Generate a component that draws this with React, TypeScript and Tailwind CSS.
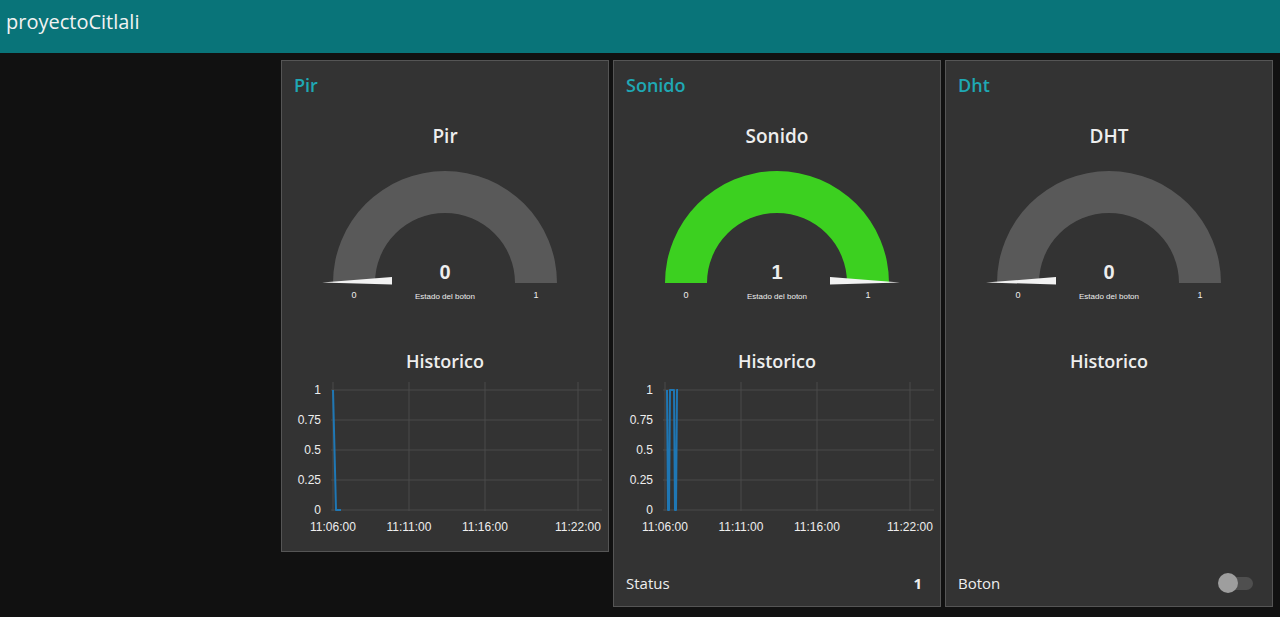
import React from "react";

const uiFont = { fontFamily: '"Open Sans", "Noto Sans", sans-serif' };

type GaugeProps = { title: string; value: 0 | 1; color: string };

const Gauge = ({ title, value, color }: GaugeProps) => {
  // arc centre in svg coords
  const cx = 163;
  const cy = 135;
  const needle =
    value === 0
      ? "40,134.5 110,129 110,136.5"
      : "286,134.5 216,129 216,136.5";
  return (
    <div className="flex flex-col items-center">
      <div className="mt-[15px] h-[24px] text-[19px] leading-[24px] font-semibold text-[#eeeeee]">
        {title}
      </div>
      <svg width="326" height="157" viewBox="0 0 326 157">
        <path
          d={`M ${cx - 112} ${cy} A 112 112 0 0 1 ${cx + 112} ${cy} L ${cx + 70} ${cy} A 70 70 0 0 0 ${cx - 70} ${cy} Z`}
          fill={color}
        />
        <polygon points={needle} fill="#f2f2f2" />
        <text
          x={cx}
          y={131}
          textAnchor="middle"
          fill="#eeeeee"
          fontSize="20"
          fontWeight="bold"
          fontFamily="Liberation Sans, Arial, sans-serif"
        >
          {value}
        </text>
        <text x={72} y={150} textAnchor="middle" fill="#eeeeee" fontSize="9" fontFamily="Liberation Sans, Arial, sans-serif">
          0
        </text>
        <text x={254} y={150} textAnchor="middle" fill="#eeeeee" fontSize="9" fontFamily="Liberation Sans, Arial, sans-serif">
          1
        </text>
        <text x={cx} y={151} textAnchor="middle" fill="#eeeeee" fontSize="8" fontFamily="Liberation Sans, Arial, sans-serif">
          Estado del boton
        </text>
      </svg>
    </div>
  );
};

const yTicks = [
  { label: "1", y: 12 },
  { label: "0.75", y: 42 },
  { label: "0.5", y: 72 },
  { label: "0.25", y: 102 },
  { label: "0", y: 132 },
];

const xTicks = [
  { label: "11:06:00", x: 51 },
  { label: "11:11:00", x: 127 },
  { label: "11:16:00", x: 203 },
  { label: "11:22:00", x: 296 },
];

const Chart = ({ points }: { points: string }) => {
  return (
    <svg width="326" height="162" viewBox="0 0 326 162">
      {yTicks.map((t) => (
        <g key={t.label}>
          <line x1={49} x2={320} y1={t.y} y2={t.y} stroke="#4a4a4a" strokeWidth="1" />
          <text
            x={39}
            y={t.y + 4}
            textAnchor="end"
            fill="#eeeeee"
            fontSize="12"
            fontFamily="Liberation Sans, Arial, sans-serif"
          >
            {t.label}
          </text>
        </g>
      ))}
      {xTicks.map((t) => (
        <g key={t.label}>
          <line x1={t.x} x2={t.x} y1={4} y2={133} stroke="#4a4a4a" strokeWidth="1" />
          <text
            x={t.x}
            y={153}
            textAnchor="middle"
            fill="#eeeeee"
            fontSize="12"
            fontFamily="Liberation Sans, Arial, sans-serif"
          >
            {t.label}
          </text>
        </g>
      ))}
      <polyline points={points} fill="none" stroke="#1f77b4" strokeWidth="2" strokeLinejoin="round" />
    </svg>
  );
};

const Card = ({ name, children }: { name: string; children: React.ReactNode }) => {
  return (
    <div className="w-[328px] border border-[#555555] bg-[#333333] flex flex-col">
      <div className="h-[48px] px-[12px] pt-[12px] text-[18px] leading-[24px] font-semibold text-[#1fa8b4]">
        {name}
      </div>
      {children}
    </div>
  );
};

const Historico = () => (
  <div className="mt-[44px] h-[24px] text-center text-[18px] leading-[24px] font-semibold text-[#eeeeee]">
    Historico
  </div>
);

export default function App() {
  return (
    <div className="w-[1280px] h-[617px] overflow-hidden bg-[#111111]" style={uiFont}>
      <header className="h-[53px] bg-[#097479] px-[6px] pt-[8px] text-[20px] leading-[28px] text-[#f2f2f2]">
        proyectoCitlali
      </header>
      <main className="flex items-start gap-[4px] pl-[281px] pt-[7px]">
        <Card name="Pir">
          <Gauge title="Pir" value={0} color="#595959" />
          <Historico />
          <div className="mt-[5px] mb-[11px]">
            <Chart points="51,12 54,132 59,132" />
          </div>
        </Card>

        <Card name="Sonido">
          <Gauge title="Sonido" value={1} color="#3cd020" />
          <Historico />
          <div className="mt-[5px]">
            <Chart points="53,12 54,132 55,132 56,12 60,12 61,132 62,132 63,12 64,12" />
          </div>
          <div className="mt-[31px] mb-[11px] h-[24px] flex items-center justify-between pl-[12px] pr-[18px] text-[15px] text-[#eeeeee]">
            <span>Status</span>
            <span className="font-bold">1</span>
          </div>
        </Card>

        <Card name="Dht">
          <Gauge title="DHT" value={0} color="#595959" />
          <Historico />
          <div className="mt-[5px] h-[162px]" />
          <div className="mt-[31px] mb-[11px] h-[24px] flex items-center justify-between pl-[12px] pr-[18px] text-[15px] text-[#eeeeee]">
            <span>Boton</span>
            <div className="relative w-[36px] h-[20px] flex items-center">
              <div className="ml-[4px] w-[31px] h-[13px] rounded-full bg-[#4f4f4f]" />
              <div className="absolute left-0 top-0 w-[20px] h-[20px] rounded-full bg-[#9e9e9e]" />
            </div>
          </div>
        </Card>
      </main>
    </div>
  );
}
